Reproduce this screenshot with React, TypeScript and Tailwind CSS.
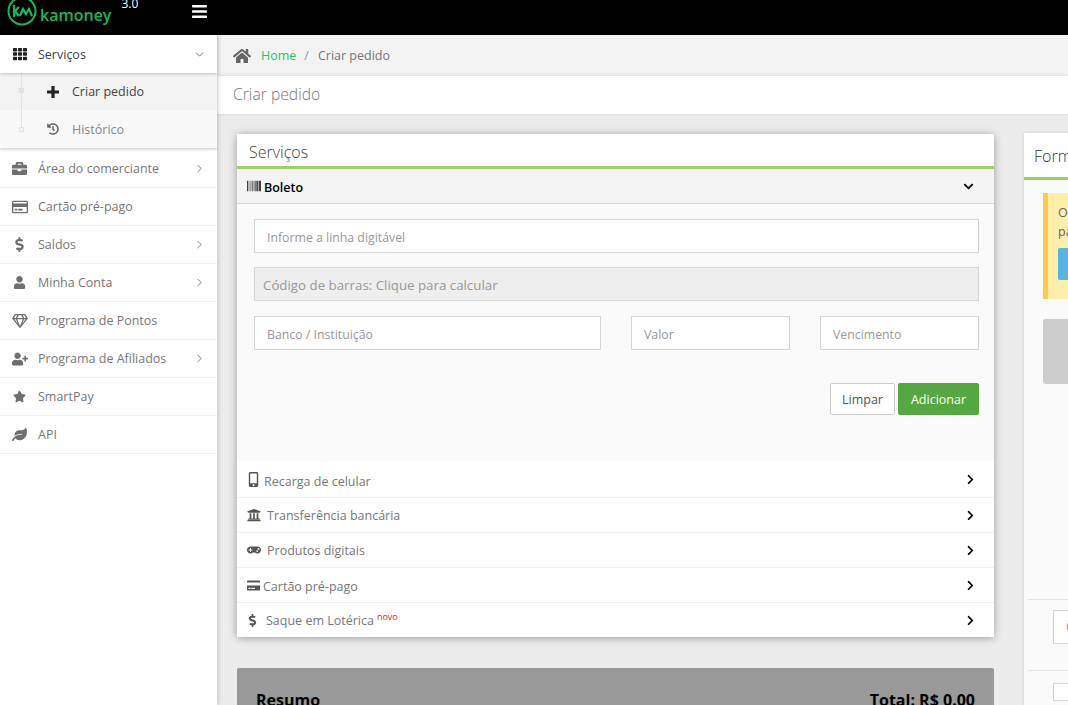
import { ReactNode } from "react";
import { ChevronDown, ChevronRight } from "lucide-react";
import {
  FaBars, FaBriefcase, FaChevronDown, FaChevronRight, FaDollarSign, FaGamepad, FaHistory, FaHome,
  FaLeaf, FaMobileAlt, FaRegCreditCard, FaRegGem, FaStar, FaTh, FaUniversity, FaUser, FaUserPlus, FaBarcode, FaCreditCard,
} from "react-icons/fa";

const sideItems: { label: string; icon: ReactNode; arrow?: boolean }[] = [
  { label: "Área do comerciante", icon: <FaBriefcase size={15} />, arrow: true },
  { label: "Cartão pré-pago", icon: <FaRegCreditCard size={16} /> },
  { label: "Saldos", icon: <FaDollarSign size={15} />, arrow: true },
  { label: "Minha Conta", icon: <FaUser size={13} />, arrow: true },
  { label: "Programa de Pontos", icon: <FaRegGem size={16} /> },
  { label: "Programa de Afiliados", icon: <FaUserPlus size={16} />, arrow: true },
  { label: "SmartPay", icon: <FaStar size={13} /> },
  { label: "API", icon: <FaLeaf size={15} /> },
];

const services: { label: string; icon: ReactNode; cls: string; textCls: string; novo?: boolean }[] = [
  { label: "Recarga de celular", icon: <FaMobileAlt size={15} />, cls: "h-[36px] pl-[9px] gap-[3px]", textCls: "pt-[7px]" },
  { label: "Transferência bancária", icon: <FaUniversity size={14} />, cls: "h-[35px] pl-[10px] gap-[6px]", textCls: "pt-[2px]" },
  { label: "Produtos digitais", icon: <FaGamepad size={14} />, cls: "h-[35px] pl-[10px] gap-[6px]", textCls: "pt-[2px]" },
  { label: "Cartão pré-pago", icon: <FaCreditCard size={13} />, cls: "h-[35px] pl-[10px] gap-[3px]", textCls: "pt-[5px]" },
  { label: "Saque em Lotérica", icon: <FaDollarSign size={13} />, cls: "h-[35px] pl-[9px] gap-[7px]", textCls: "pt-[2px]", novo: true },
];

const SideRow = ({ label, icon, arrow }: { label: string; icon: ReactNode; arrow?: boolean }) => (
  <div className="flex h-[38px] items-center border-b border-[#f0f0f0] pl-[11px] pr-[11px] text-[#777]">
    <div className="flex w-[17px] justify-center text-[#6f6f6f]">{icon}</div>
    <span className="ml-[10px] flex-1 pt-[2px] text-[12.5px]">{label}</span>
    {arrow && <ChevronRight size={13} strokeWidth={1.5} className="text-[#666]" />}
  </div>
);

const Field = ({ text, className }: { text: string; className: string }) => (
  <div className={`flex h-[34px] items-center border border-[#d5d5d5] bg-white pl-[12px] pt-[5px] text-[12.3px] text-[#999] ${className}`}>{text}</div>
);

const Logo = () => (
  <div className="flex items-center">
    <svg width="30" height="30" viewBox="0 0 30 30" fill="none" stroke="#17b85c" strokeWidth="2" className="ml-[7px] -mt-[14px]">
      <circle cx="15" cy="15" r="13.5" />
      <path d="M7 9v12M7 16l5-5M8 15l4 5M13 20l3-7 3 5 3-5 3 7" strokeWidth="2.2" />
    </svg>
    <span className="-mt-[6px] ml-[3px] text-[16px] font-semibold text-[#17b85c]">kamoney</span>
  </div>
);

export default function App() {
  return (
    <div className="flex h-[705px] w-[1068px] flex-col overflow-hidden bg-[#ececec] font-['Open_Sans','Noto_Sans',sans-serif]">
      <header className="flex h-[35px] shrink-0 items-center overflow-hidden bg-black">
        <Logo />
        <span className="mb-[28px] ml-[10px] text-[12px] text-white">3.0</span>
        <FaBars size={17} className="mb-[13px] ml-[53px] text-white" />
      </header>

      <div className="flex min-h-0 flex-1">
        <aside className="z-10 w-[217px] shrink-0 bg-white shadow-[2px_0_4px_rgba(0,0,0,0.12)]">
          <div className="relative z-10 flex h-[38px] items-center bg-white pl-[13px] pr-[11px] text-[#444] shadow-[0_1px_3px_rgba(0,0,0,0.2)]">
            <FaTh size={14} className="text-[#222]" />
            <span className="ml-[11px] flex-1 pt-[2px] text-[12.5px]">Serviços</span>
            <ChevronDown size={13} strokeWidth={1.5} className="text-[#6b5030]" />
          </div>
          <div className="relative shadow-[0_2px_2px_rgba(0,0,0,0.15)]">
            <div className="absolute left-[21px] top-0 h-[56px] w-px bg-[#e3e3e3]" />
            <div className="absolute left-[19px] top-[15px] h-[5px] w-[5px] bg-[#e3e3e3]" />
            <div className="absolute left-[19px] top-[54px] h-[5px] w-[5px] border border-[#e3e3e3] bg-[#f8f8f8]" />
            <div className="flex h-[37px] items-center bg-[#f3f3f3] pl-[47px] text-[12.5px] text-[#444]">
              <svg width="12" height="12" viewBox="0 0 12 12" className="fill-[#222]">
                <path d="M4.4 0h3.2v4.4H12v3.2H7.6V12H4.4V7.6H0V4.4h4.4z" />
              </svg>
              <span className="ml-[13px] pt-[2px]">Criar pedido</span>
            </div>
            <div className="flex h-[38px] items-center bg-[#f8f8f8] pl-[47px] text-[12.5px] text-[#888]">
              <FaHistory size={12} className="text-[#666]" />
              <span className="ml-[13px] pt-[2px]">Histórico</span>
            </div>
          </div>
          <div className="mt-[2px]">
            {sideItems.map((item) => <SideRow key={item.label} {...item} />)}
          </div>
        </aside>

        <main className="min-w-0 flex-1">
          <div className="flex h-[41px] items-center bg-[#f3f3f3] pl-[16px] text-[12.5px]">
            <FaHome size={18} className="text-[#666]" />
            <span className="ml-[10px] pt-[2px] text-[#1fc26f]">Home</span>
            <span className="ml-[8px] pt-[2px] text-[#999]">/</span>
            <span className="ml-[9px] pt-[2px] text-[#777]">Criar pedido</span>
          </div>
          <div className="flex h-[39px] items-center border-b border-[#e2e2e2] bg-white pl-[16px] text-[15.7px] font-light text-[#777] shadow-[0_-1px_3px_rgba(0,0,0,0.1)]">Criar pedido</div>

          <div className="flex items-start gap-[30px] pl-[20px] pt-[19px]">
            <div className="w-[757px] shrink-0">
              <section className="bg-white shadow-[0_1px_8px_rgba(0,0,0,0.35)]">
                <div className="flex h-[32px] items-center pl-[12px] pt-[4px] text-[16px] font-light text-[#444]">Serviços</div>
                <div className="h-[3px] bg-[#9bd264]" />
                <div className="flex h-[35px] items-center justify-between border-b border-[#d8d8d8] bg-[#f4f4f4] pl-[10px] pr-[20px]">
                  <div className="flex items-center gap-[3px] text-[12.5px] font-semibold text-black">
                    <FaBarcode size={14} />
                    <span className="pt-[5px]">Boleto</span>
                  </div>
                  <FaChevronDown size={11} className="text-black" />
                </div>
                <div className="flex h-[257px] flex-col bg-[#fafafa] pl-[17px] pr-[15px] pt-[15px]">
                  <Field text="Informe a linha digitável" className="w-full" />
                  <div className="mt-[14px] flex h-[34px] items-center border border-[#d5d5d5] bg-[#eee] pl-[8px] pt-[3px] text-[13.3px] text-[#999]">Código de barras: Clique para calcular</div>
                  <div className="mt-[15px] flex justify-between">
                    <Field text="Banco / Instituição" className="w-[347px]" />
                    <Field text="Valor" className="ml-[30px] w-[159px]" />
                    <Field text="Vencimento" className="ml-[30px] w-[159px]" />
                  </div>
                  <div className="mt-[33px] flex justify-end gap-[3px]">
                    <div className="flex h-[32px] w-[65px] items-center justify-center rounded-[2px] border border-[#ccc] bg-white pt-[2px] text-[12.5px] text-[#555]">Limpar</div>
                    <div className="flex h-[32px] w-[81px] items-center justify-center rounded-[2px] bg-[#53a93f] pt-[2px] text-[12.5px] font-medium text-white">Adicionar</div>
                  </div>
                </div>
                {services.map((s, i) => (
                  <div key={s.label} className={`flex items-center pr-[18px] text-[12.5px] text-[#777] ${i > 0 ? "border-t border-[#f0f0f0]" : ""} ${s.cls}`}>
                    <span className="flex justify-center text-[#555]">{s.icon}</span>
                    <span className={`flex-1 ${s.textCls}`}>
                      {s.label}
                      {s.novo && <sup className="ml-[3px] text-[9px] text-[#b03030]">novo</sup>}
                    </span>
                    <FaChevronRight size={11} className="text-black" />
                  </div>
                ))}
              </section>
              <section className="mt-[31px] h-[80px] rounded-t-[2px] bg-[#999] px-[19px] pt-[20px]">
                <div className="flex justify-between text-[16px] font-bold text-black">
                  <span>Resumo</span>
                  <span>Total: R$ 0.00</span>
                </div>
              </section>
            </div>

            <section className="-mt-px h-[700px] w-[320px] shrink-0 rounded-t-[2px] bg-[#fafafa] shadow-[0_0_4px_rgba(0,0,0,0.12)]">
              <div className="flex h-[44px] items-center bg-white pl-[10px] pt-[2px] text-[16px] font-light text-[#333]">Forma de pagamento</div>
              <div className="h-[3px] bg-[#9bd264]" />
              <div className="px-[19px] pt-[13px]">
                <div className="h-[106px] whitespace-nowrap border-l-[5px] border-[#ffc94f] bg-[#fdeeaa] pl-[10px] pt-[10px] text-[12.5px] leading-[19px] text-[#666]">
                  <p>O pagamento deve ser realizado</p>
                  <p>para que o pedido seja processado</p>
                  <div className="mt-[7px] h-[32px] w-[140px] rounded-[2px] bg-[#57b5e3]" />
                </div>
                <div className="mt-[20px] h-[65px] rounded-[3px] bg-[#ccc]" />
              </div>
              <div className="mx-[4px] mt-[215px] border-t border-[#e5e5e5] px-[25px] pt-[10px]">
                <div className="flex h-[34px] items-center border border-[#d5d5d5] bg-white pl-[12px] text-[12.5px] text-[#999]">Cupom</div>
              </div>
              <div className="mx-[4px] mt-[26px] border-t border-[#e5e5e5] px-[25px] pt-[12px]">
                <div className="h-[18px] w-[100px] border border-[#d5d5d5] bg-white" />
              </div>
            </section>
          </div>
        </main>
      </div>
    </div>
  );
}
